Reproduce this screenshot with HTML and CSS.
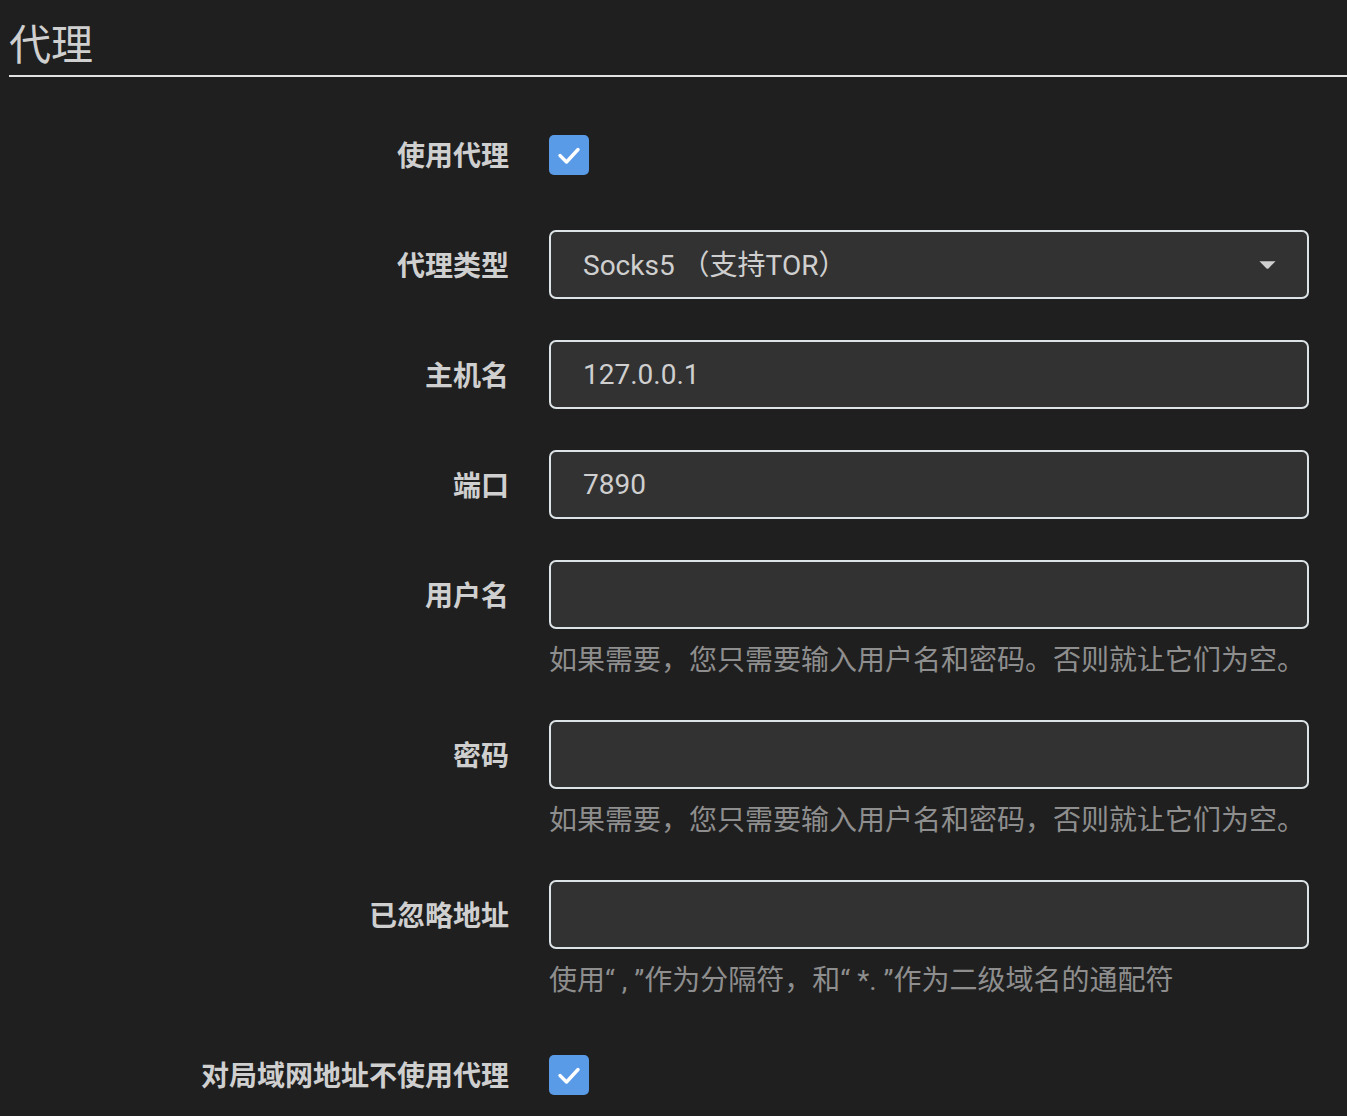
FILE: index.html
```html
<!DOCTYPE html>
<html lang="zh-CN">
<head>
<meta charset="utf-8">
<title>代理</title>
<link rel="stylesheet" href="styles.css">
</head>
<body>
<div class="page">
  <h1 class="title">代理</h1>
  <form class="form">
    <div class="row">
      <label class="label">使用代理</label>
      <div class="control check-row">
        <span class="checkbox"><svg viewBox="0 0 40 40" width="40" height="40"><path d="M11 20.5 L17.5 27 L29 14.5" fill="none" stroke="#fff" stroke-width="3.4" stroke-linecap="round" stroke-linejoin="round"/></svg></span>
      </div>
    </div>
    <div class="row">
      <label class="label">代理类型</label>
      <div class="control">
        <div class="field select"><span class="select-text">Socks5 （支持TOR）</span><svg class="caret" viewBox="0 0 20 10" width="19" height="10"><path d="M1.5 1 L18.5 1 L11 8.6 Q10 9.5 9 8.6 Z" fill="#cfcfcf"/></svg></div>
      </div>
    </div>
    <div class="row">
      <label class="label">主机名</label>
      <div class="control"><input class="field" type="text" value="127.0.0.1"></div>
    </div>
    <div class="row">
      <label class="label">端口</label>
      <div class="control"><input class="field" type="text" value="7890"></div>
    </div>
    <div class="row">
      <label class="label">用户名</label>
      <div class="control">
        <input class="field" type="text" value="">
        <div class="help">如果需要，您只需要输入用户名和密码。否则就让它们为空。</div>
      </div>
    </div>
    <div class="row">
      <label class="label">密码</label>
      <div class="control">
        <input class="field" type="password" value="">
        <div class="help">如果需要，您只需要输入用户名和密码，否则就让它们为空。</div>
      </div>
    </div>
    <div class="row">
      <label class="label">已忽略地址</label>
      <div class="control">
        <input class="field" type="text" value="">
        <div class="help">使用“ , ”作为分隔符，和“ *. ”作为二级域名的通配符</div>
      </div>
    </div>
    <div class="row">
      <label class="label">对局域网地址不使用代理</label>
      <div class="control check-row">
        <span class="checkbox"><svg viewBox="0 0 40 40" width="40" height="40"><path d="M11 20.5 L17.5 27 L29 14.5" fill="none" stroke="#fff" stroke-width="3.4" stroke-linecap="round" stroke-linejoin="round"/></svg></span>
      </div>
    </div>
  </form>
</div>
</body>
</html>
```
FILE: styles.css
```css
html, body {
  margin: 0;
  padding: 0;
  background: #1f1f1f;
}
body {
  font-family: Roboto, "Noto Sans CJK SC", sans-serif;
  color: #cccccc;
  overflow: hidden;
}
.page {
  padding-left: 9px;
}
.title {
  margin: 0;
  padding: 14px 0 5px 0;
  font-size: 42px;
  line-height: 56px;
  font-weight: 400;
  color: #cfcfcf;
  font-family: "Noto Sans CJK SC", sans-serif;
  border-bottom: 2px solid #e2e2e2;
}
.form {
  margin-top: 43px;
  display: flex;
  flex-direction: column;
  gap: 41px;
  padding-right: 38px;
}
.row {
  display: grid;
  grid-template-columns: 500px 1fr;
  column-gap: 40px;
  align-items: start;
}
.label {
  height: 69px;
  line-height: 69px;
  text-align: right;
  font-family: "Noto Sans CJK SC", sans-serif;
  font-weight: 700;
  font-size: 28px;
  color: #cfcfcf;
  white-space: nowrap;
}
.control {
  display: flex;
  flex-direction: column;
}
.check-row {
  height: 69px;
  justify-content: center;
}
.checkbox {
  width: 40px;
  height: 40px;
  border-radius: 5px;
  background: #5a9be8;
  display: block;
}
.checkbox svg {
  display: block;
}
.field {
  box-sizing: border-box;
  height: 69px;
  width: 100%;
  margin: 0;
  border: 2px solid #dce4e7;
  border-radius: 7px;
  background: #323232;
  color: #cfcfcf;
  font-family: Roboto, "Noto Sans CJK SC", sans-serif;
  font-size: 28px;
  padding: 0 32px;
  outline: none;
}
.select {
  display: flex;
  align-items: center;
  justify-content: space-between;
  padding-right: 30px;
}
.select-text {
  position: relative;
  top: -2px;
}
.caret {
  display: block;
}
.help {
  margin-top: 14px;
  line-height: 36px;
  font-size: 28px;
  color: #8e8e8e;
  font-family: Roboto, "Noto Sans CJK SC", sans-serif;
  white-space: pre;
}
```
